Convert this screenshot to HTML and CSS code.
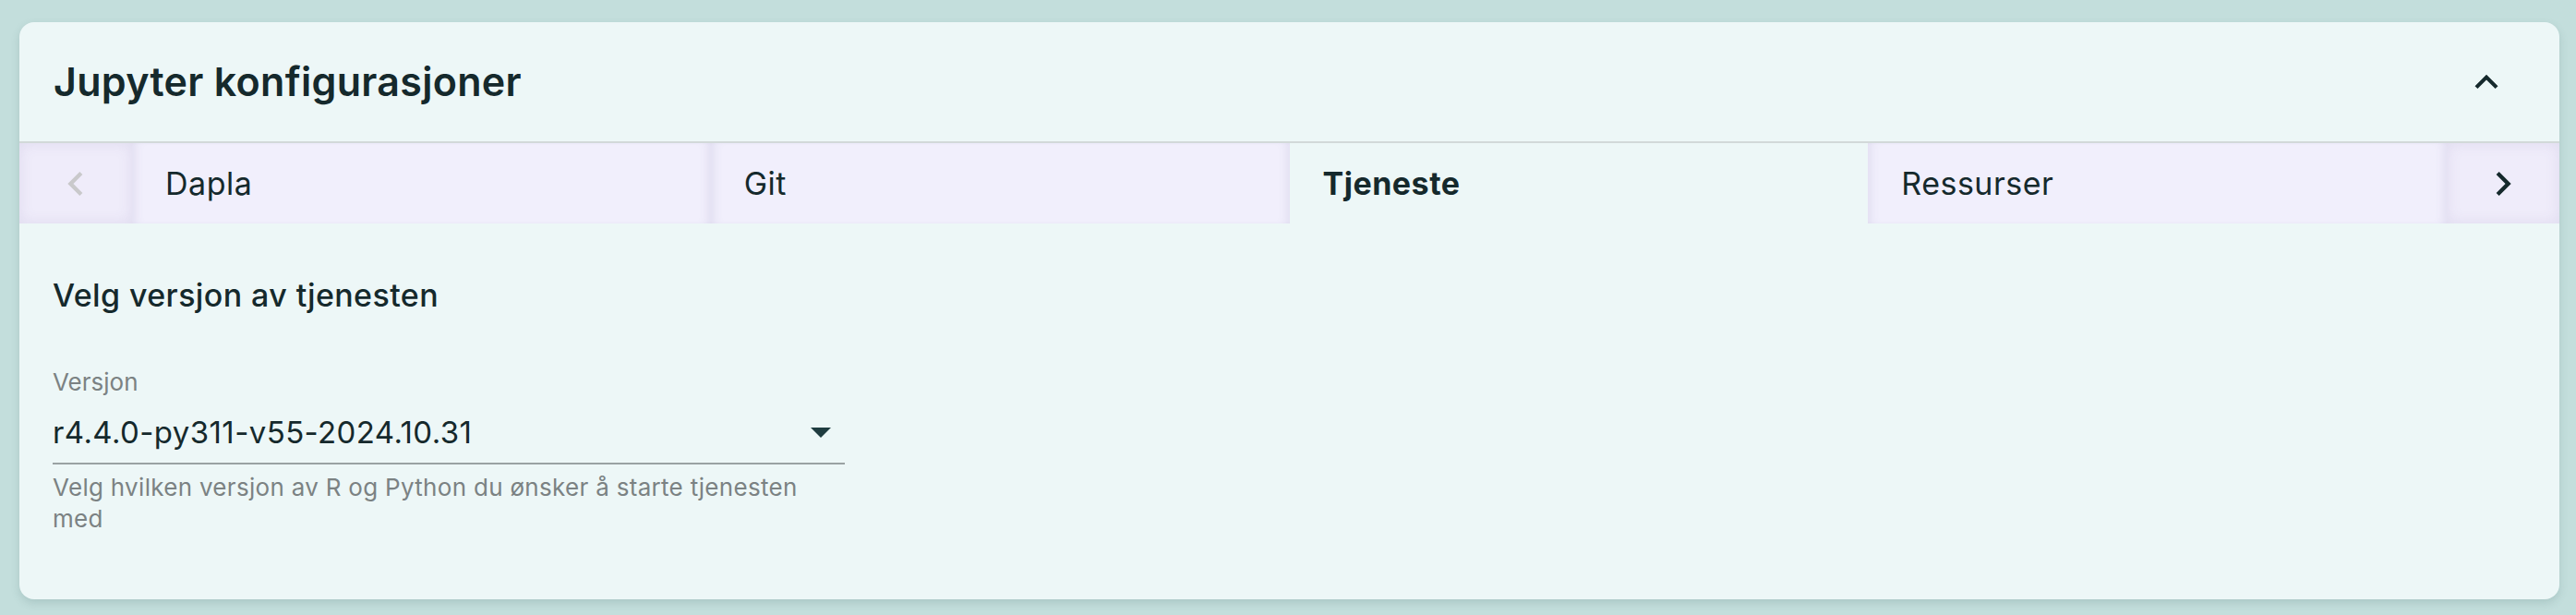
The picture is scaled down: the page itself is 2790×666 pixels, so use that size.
FILE: index.html
```html
<!DOCTYPE html>
<html lang="no">
<head>
<meta charset="utf-8">
<title>Jupyter konfigurasjoner</title>
<link rel="stylesheet" href="styles.css">
</head>
<body>
<section class="card">
  <header class="card-header">
    <h2 class="card-title">Jupyter konfigurasjoner</h2>
    <button class="collapse-btn" aria-label="Skjul">
      <svg viewBox="0 0 24 24" width="50" height="50"><path d="M12 8l-6 6 1.41 1.41L12 10.83l4.59 4.58L18 14z"/></svg>
    </button>
  </header>
  <nav class="tabs">
    <button class="tab-arrow disabled" aria-label="Forrige">
      <svg viewBox="0 0 24 24" width="52" height="52"><path d="M15.41 7.41 14 6l-6 6 6 6 1.41-1.41L10.83 12z"/></svg>
    </button>
    <div class="tab">Dapla</div>
    <div class="tab">Git</div>
    <div class="tab active">Tjeneste</div>
    <div class="tab">Ressurser</div>
    <button class="tab-arrow" aria-label="Neste">
      <svg viewBox="0 0 24 24" width="52" height="52"><path d="M10 6 8.59 7.41 13.17 12l-4.58 4.59L10 18l6-6z"/></svg>
    </button>
  </nav>
  <div class="card-body">
    <h3 class="section-title">Velg versjon av tjenesten</h3>
    <div class="field">
      <label class="field-label">Versjon</label>
      <div class="select">
        <span class="select-value">r4.4.0-py311-v55-2024.10.31</span>
        <span class="select-caret"></span>
      </div>
      <p class="helper">Velg hvilken versjon av R og Python du ønsker å starte tjenesten med</p>
    </div>
  </div>
</section>
</body>
</html>
```

FILE: styles.css
```css
* { box-sizing: border-box; }

html, body {
  margin: 0;
  height: 100%;
}

body {
  background: #c3dedc;
  padding: 24px 18px 0 21px;
  font-family: "Inter", "Roboto", sans-serif;
  color: #15292c;
}

.card {
  background: #edf7f7;
  border-radius: 16px;
  box-shadow: 0 4px 10px rgba(60, 100, 100, 0.18);
  overflow: hidden;
}

.card-header {
  height: 131px;
  display: flex;
  align-items: center;
  justify-content: space-between;
  padding: 0 54px 0 37px;
  border-bottom: 2px solid #d2d9d9;
}

.card-title {
  margin: 0;
  font-size: 43px;
  font-weight: 600;
  letter-spacing: 0.3px;
  line-height: 1.2;
  color: #15292c;
}

.collapse-btn {
  border: 0;
  background: none;
  padding: 0;
  width: 50px;
  height: 50px;
  display: flex;
  cursor: pointer;
}

.collapse-btn svg { fill: #15292c; }

.tabs {
  display: flex;
  height: 87px;
}

.tab-arrow {
  flex: 0 0 122px;
  border: 0;
  padding: 0;
  display: flex;
  align-items: center;
  justify-content: center;
  background: #efecfa;
  box-shadow: inset 0 0 16px rgba(90, 70, 140, 0.10);
}

.tab-arrow svg { fill: #15292c; }
.tab-arrow.disabled svg { fill: #c9c9cb; }

.tab {
  flex: 1 1 0;
  display: flex;
  align-items: center;
  padding-left: 36px;
  font-size: 34px;
  letter-spacing: 0.5px;
  font-weight: 400;
  background: #f1effc;
  box-shadow: inset 10px 0 12px -8px rgba(90, 70, 140, 0.12),
              inset -10px 0 12px -8px rgba(90, 70, 140, 0.12);
  color: #15292c;
}

.tab.active {
  background: #edf7f7;
  box-shadow: none;
  font-weight: 700;
}

.card-body {
  padding: 58px 36px 70px 36px;
}

.section-title {
  margin: 0;
  font-size: 34px;
  letter-spacing: 0.4px;
  line-height: 40px;
  font-weight: 500;
  color: #15292c;
}

.field {
  width: 858px;
  margin-top: 58px;
}

.field-label {
  display: block;
  font-size: 26px;
  line-height: 32px;
  color: #7b8283;
}

.select {
  margin-top: 18px;
  display: flex;
  align-items: center;
  justify-content: space-between;
  padding: 0 15px 13px 0;
  border-bottom: 2px solid #9aa2a3;
}

.select-value {
  font-size: 33px;
  letter-spacing: 0.4px;
  line-height: 40px;
  color: #15292c;
}

.select-caret {
  width: 0;
  height: 0;
  border-left: 11px solid transparent;
  border-right: 11px solid transparent;
  border-top: 11px solid #1f3c40;
}

.helper {
  margin: 8px 0 0;
  font-size: 26px;
  letter-spacing: 0.3px;
  line-height: 34px;
  color: #7b8283;
}
```
